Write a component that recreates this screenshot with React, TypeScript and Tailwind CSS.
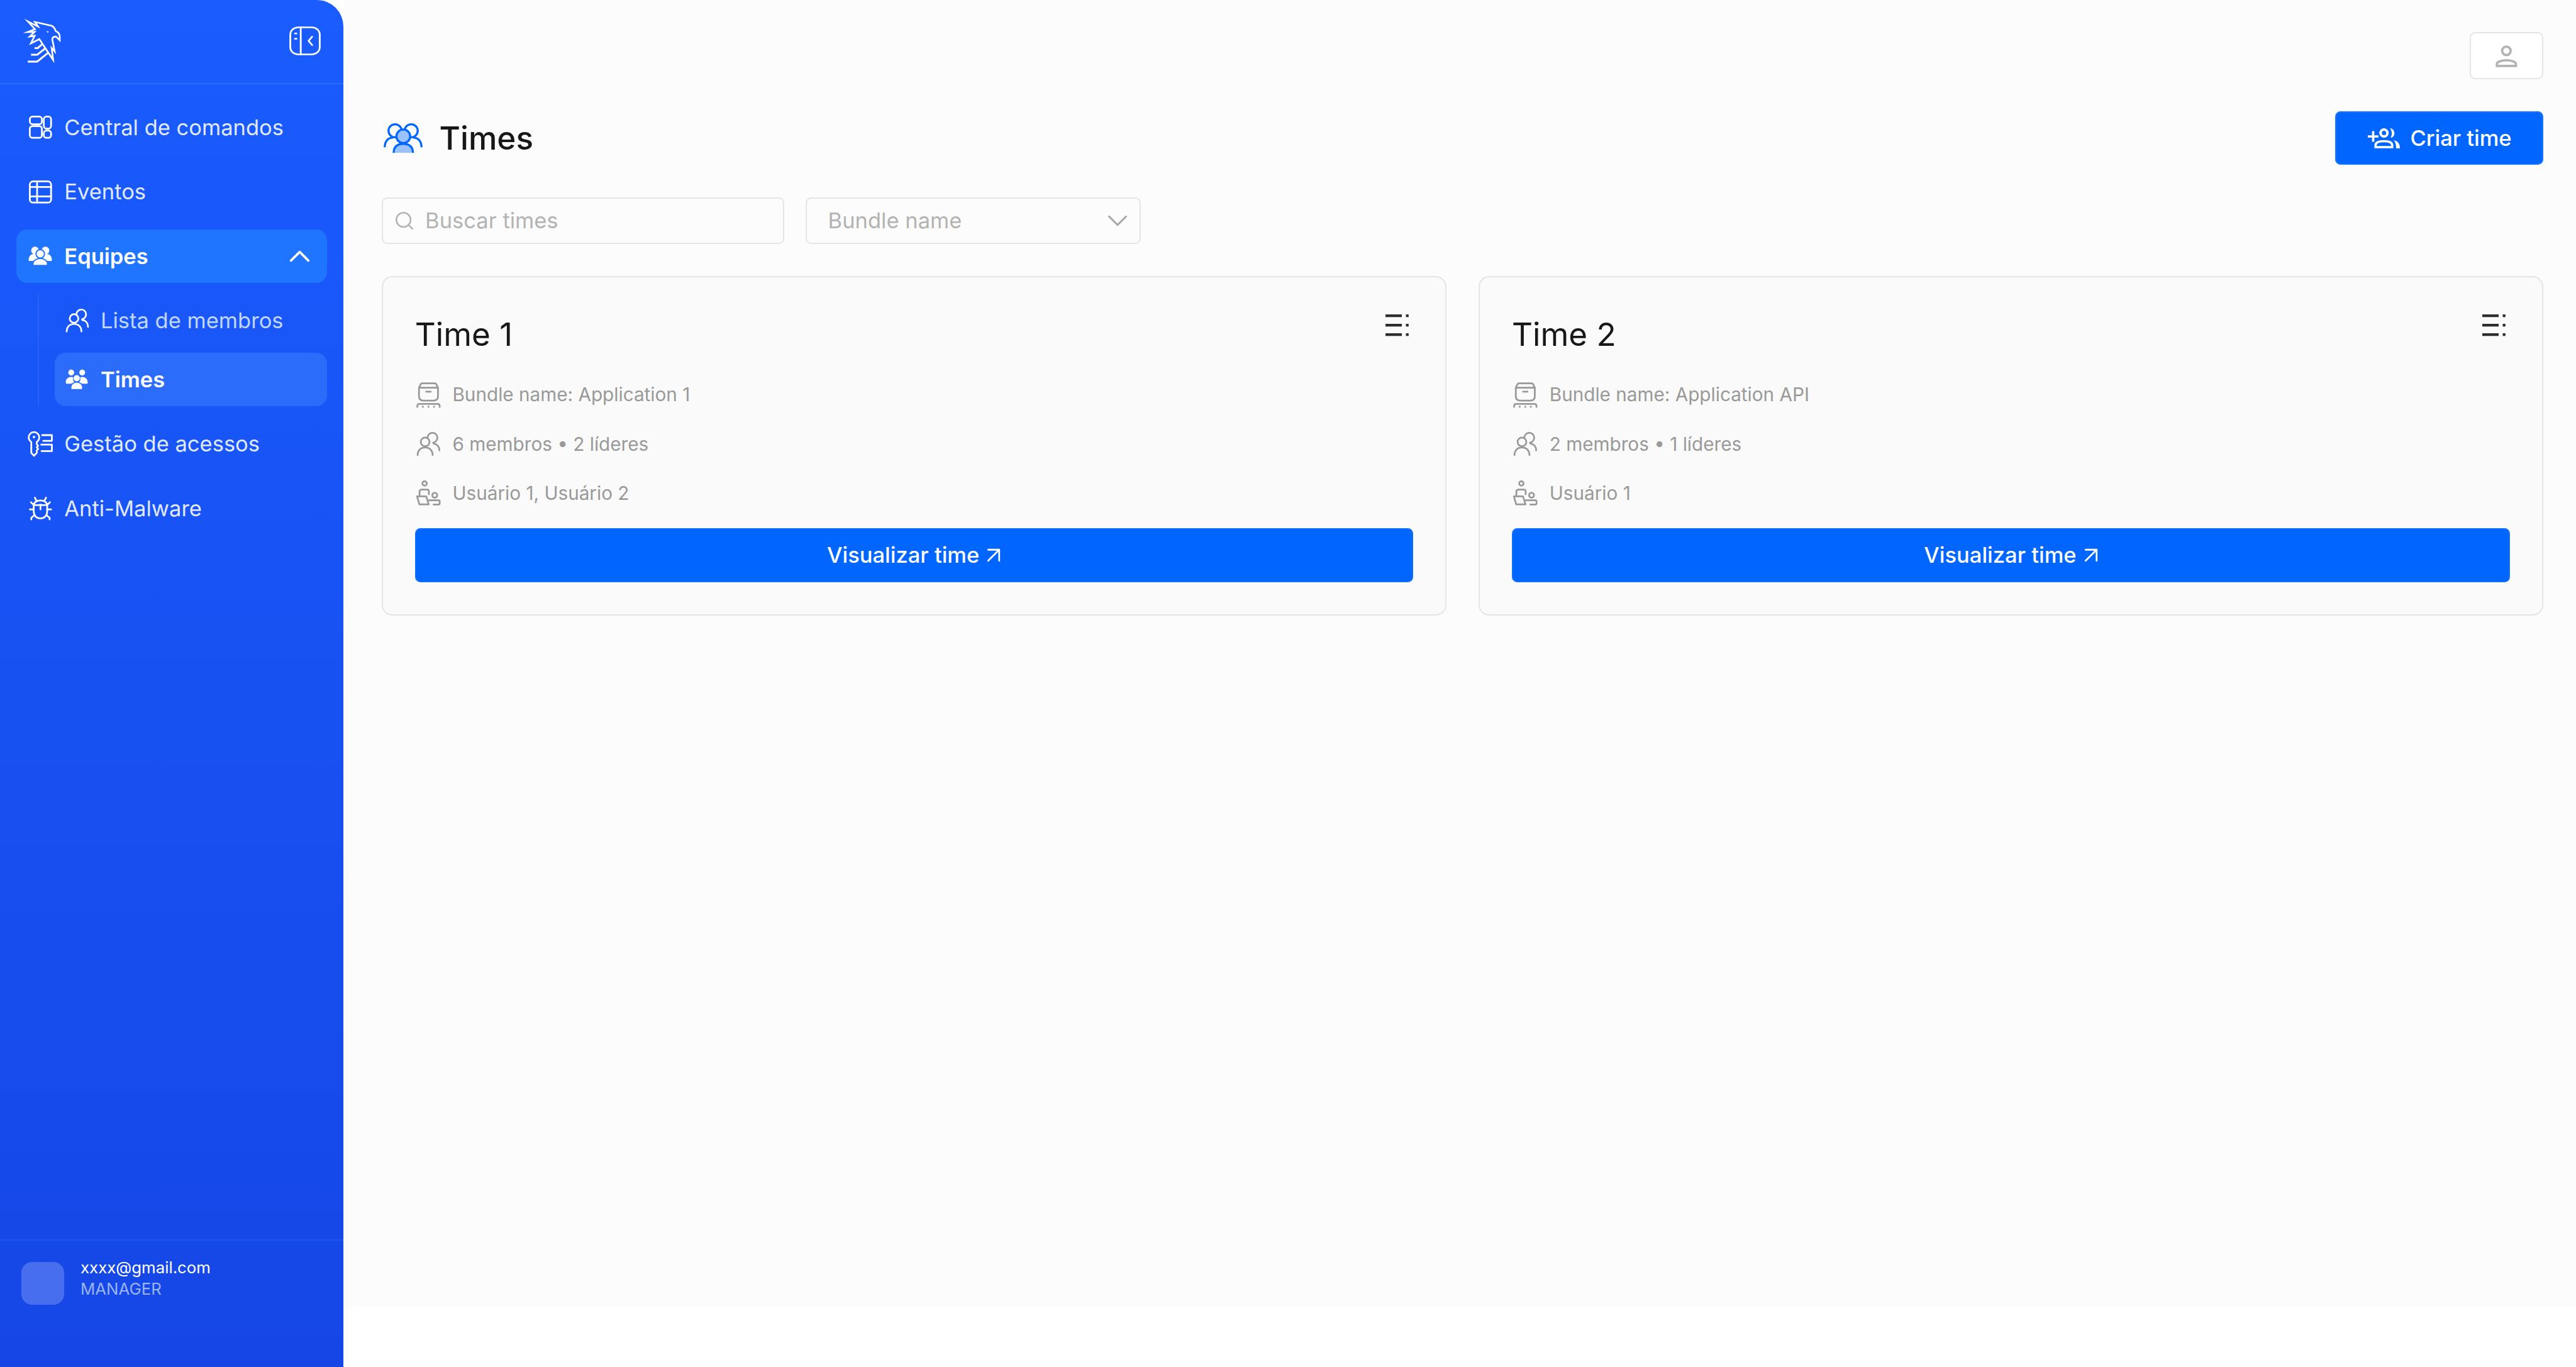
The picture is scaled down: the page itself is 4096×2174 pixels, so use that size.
import { ArrowUpRight, ChevronDown, ChevronUp, Search } from "lucide-react";
import type { ReactNode } from "react";

function Stroke({ children, className }: { children: ReactNode; className?: string }) {
  return (
    <svg viewBox="0 0 24 24" fill="none" stroke="currentColor" strokeWidth="1.55" strokeLinecap="round" strokeLinejoin="round" className={className}>
      {children}
    </svg>
  );
}

function Logo() {
  return (
    <svg viewBox="90 80 350 400" className="h-[71px] w-[62px]" fill="none" stroke="#fff">
      <path
        strokeWidth="15"
        strokeMiterlimit="8"
        d="M195 108 L345 142 Q368 152 382 190 Q410 200 417 232 V272 L385 240 Q352 238 350 262 L372 372 L345 342 L358 448 L234 262 L158 300 L192 232 L148 238 L192 196 L128 198 L195 172 L132 103 L222 148 Z"
      />
      <path strokeWidth="17" d="M192 342H220L256 310M160 402H215L287 345M130 463H215L312 385" />
      <path fill="#fff" stroke="none" d="M297 187L322 197L307 204Z" />
    </svg>
  );
}

function CollapseIcon() {
  return (
    <svg viewBox="1 1 22 22" preserveAspectRatio="none" fill="none" stroke="#fff" strokeWidth="1.25" strokeLinecap="round" strokeLinejoin="round" className="h-[46px] w-[50px]">
      <rect x="1.7" y="1.7" width="20.6" height="20.6" rx="5.5" />
      <path d="M9 1.7V22.3M5 6.4H6M5 10.4H6M17 8.8L14.5 12L17 15.2" />
    </svg>
  );
}

function DashIcon() {
  return (
    <Stroke className="size-[42.67px]">
      <rect x="2.5" y="2.5" width="10.8" height="6.8" rx="2.4" />
      <rect x="2.5" y="11" width="10.8" height="10.5" rx="2.4" />
      <rect x="15" y="2.5" width="6.5" height="10.8" rx="2.4" />
      <rect x="15" y="15" width="6.5" height="6.5" rx="2.4" />
    </Stroke>
  );
}

function TableIcon() {
  return (
    <Stroke className="size-[42.67px]">
      <rect x="2.5" y="2.5" width="19" height="19" rx="3" />
      <path d="M2.5 7.5H21.5M2.5 16H21.5M9 2.5V21.5" />
    </Stroke>
  );
}

function TeamFilledIcon() {
  return (
    <svg viewBox="0 0 24 20" className="h-[32px] w-[40px]" fill="#fff">
      <circle cx="6.8" cy="4.6" r="3.8" />
      <circle cx="17.2" cy="4.6" r="3.8" />
      <path d="M0.5 14C0.5 10 3 8 6 8H18C21 8 23.5 10 23.5 14V15H0.5Z" />
      <circle cx="12" cy="8" r="4.2" stroke="#1f75ff" strokeWidth="1.2" />
      <path d="M4.8 19.5V18C4.8 14.6 8 12.6 12 12.6S19.2 14.6 19.2 18V19.5Z" stroke="#1f75ff" strokeWidth="1.2" />
    </svg>
  );
}

function MembersIcon({ className }: { className?: string }) {
  return (
    <Stroke className={className}>
      <circle cx="9" cy="10" r="3.9" />
      <path d="M2.3 21.8C2.3 17.6 5 15 9 15S15.7 17.6 15.7 21.8" />
      <path d="M11.2 6.7A4.4 4.4 0 1 1 16.3 10.6" />
      <path d="M16.4 11.4C19.6 11.8 21.7 14.2 21.7 17.6" />
    </Stroke>
  );
}

function TimesFilledIcon() {
  return (
    <svg viewBox="0 0 24 22" className="h-[32px] w-[36px]" fill="#fff">
      <circle cx="6" cy="3.8" r="3.2" />
      <circle cx="18" cy="3.8" r="3.2" />
      <circle cx="12" cy="10" r="3.4" />
      <path d="M0 15C0 10.5 2.6 8.6 6 8.6C6.9 8.6 7.6 8.8 8.2 9C7.6 11 8 13 9.3 14.2C7.6 14.8 6.6 15.6 6 16H0.5Z" />
      <path d="M24 15C24 10.5 21.4 8.6 18 8.6C17.1 8.6 16.4 8.8 15.8 9C16.4 11 16 13 14.7 14.2C16.4 14.8 17.4 15.6 18 16H23.5Z" />
      <path d="M6.2 21.8V20C6.2 16.8 8.8 15 12 15S17.8 16.8 17.8 20V21.8Z" />
    </svg>
  );
}

function KeyIcon() {
  return (
    <Stroke className="size-[42.67px]">
      <path d="M1.5 6.5A4.7 4.7 0 0 1 10.9 6.5C10.9 8.5 10 9.8 8.7 10.6V12.6L9.9 14L8.7 15.4L9.9 16.8L8.7 18.2V20.4L6.2 23L3.8 20.4V10.6C2.5 9.8 1.5 8.5 1.5 6.5Z" />
      <path d="M6.2 6.1V6.3" strokeWidth="2" />
      <path d="M13.5 4.5H22.2V9.6H14.5M12.7 13H22.2V18.8H13" />
    </Stroke>
  );
}

function BugIcon() {
  return (
    <Stroke className="size-[42.67px]">
      <path d="M6 9.5C6 6.8 8.5 5 12 5S18 6.8 18 9.5V15C18 18.6 15.4 21 12 21S6 18.6 6 15Z" />
      <path d="M6.4 8.8C8 9.8 9.6 9.2 12 8.8C14.4 9.2 16 9.8 17.6 8.8M12 9V13" />
      <path d="M8.5 5.5L7 2.5M15.5 5.5L17 2.5M6 9L3.5 6.6M18 9L20.5 6.6M6 13H2.5M18 13H21.5M6.8 18L3.8 20.5V22M17.2 18L20.2 20.5V22" />
    </Stroke>
  );
}

function BundleIcon() {
  return (
    <Stroke className="size-[42.67px] shrink-0">
      <path d="M3.5 6L5 2.8Q5.5 2 6.5 2H17.5Q18.5 2 19 2.8L20.5 6V13.5Q20.5 17.5 16.5 17.5H7.5Q3.5 17.5 3.5 13.5ZM3.5 6H20.5M10 9.5H14" />
      <path d="M2 23.2V22.2A1.7 1.7 0 0 1 3.7 20.5H20.3A1.7 1.7 0 0 1 22 22.2V23.2M7 22.8V23.2M12 22.8V23.2M17 22.8V23.2" />
    </Stroke>
  );
}

function LeadersIcon() {
  return (
    <Stroke className="size-[42.67px] shrink-0">
      <circle cx="8.5" cy="3.3" r="2" />
      <path d="M4 13.5V10.6A1.8 1.8 0 0 1 5.8 8.8H11A1.3 1.3 0 0 1 12.3 10.1V13" />
      <path d="M1.8 14.8H10L12.2 22H3.8ZM3.8 22H8" />
      <circle cx="17.6" cy="13.8" r="2.2" />
      <path d="M12.5 18.4H21A1 1 0 0 1 22 19.4V21.4A.7.7 0 0 1 21.3 22.1H16.5" />
    </Stroke>
  );
}

function NavRow({ icon, label, active }: { icon: ReactNode; label: string; active?: boolean }) {
  return (
    <div className={`flex h-[85.33px] items-center gap-[17px] rounded-[17px] px-[17px] ${active ? "bg-[#1f75ff]" : ""}`}>
      <span className="flex size-[42.67px] shrink-0 items-center justify-center text-white">{icon}</span>
      <span className={active ? "font-semibold text-white" : "text-[#e0e9fd]"}>{label}</span>
      {active && <ChevronUp className="ml-auto mr-[-1px] size-[55px] text-white" strokeWidth={1.6} />}
    </div>
  );
}

function Sidebar() {
  return (
    <aside className="flex h-full w-[546px] shrink-0 flex-col rounded-tr-[42px] bg-gradient-to-b from-[#1a5cff] to-[#1646e6] text-[34.5px] leading-[51px]">
      <div className="flex h-[134.4px] shrink-0 items-center justify-between border-b-[2px] border-[#2a6dff] pb-[2px] pl-[37px] pr-[36px]">
        <Logo />
        <CollapseIcon />
      </div>
      <nav className="flex flex-1 flex-col gap-[17px] p-[25.6px]">
        <NavRow icon={<DashIcon />} label="Central de comandos" />
        <NavRow icon={<TableIcon />} label="Eventos" />
        <NavRow icon={<TeamFilledIcon />} label="Equipes" active />
        <div className="ml-[34.4px] flex flex-col gap-[8.5px] border-l-[2px] border-[#2a62f5] pl-[25px]">
          <div className="flex h-[85.33px] items-center gap-[16px] px-[15px] text-[#c1d6fd]">
            <MembersIcon className="size-[42px] shrink-0 text-white" />
            <span>Lista de membros</span>
          </div>
          <div className="flex h-[85.33px] items-center gap-[20px] rounded-[17px] bg-[#2c6cfb] px-[17px]">
            <TimesFilledIcon />
            <span className="font-semibold text-white">Times</span>
          </div>
        </div>
        <NavRow icon={<KeyIcon />} label="Gestão de acessos" />
        <NavRow icon={<BugIcon />} label="Anti-Malware" />
      </nav>
      <div className="flex h-[203px] shrink-0 gap-[26px] border-t-[2px] border-[#1a55f0] pl-[34px] pt-[34px]">
        <div className="size-[68px] rounded-[17px] bg-[#476eee]" />
        <div className="-mt-[8px] text-[25.8px] leading-[34px]">
          <p className="text-white">xxxx@gmail.com</p>
          <p className="text-[#99b4f7]">MANAGER</p>
        </div>
      </div>
    </aside>
  );
}

function TeamCard({ name, bundle, counts, users }: { name: string; bundle: string; counts: string; users: string }) {
  return (
    <div className="relative flex h-[539.5px] flex-col rounded-[17px] border-[2.13px] border-[#e5e5e5] bg-[#fafafa] p-[51.2px]">
      <svg viewBox="0 0 37 35" className="absolute right-[58px] top-[59px] h-[35px] w-[37px]" fill="#2e2e2e">
        <rect y="0" width="26" height="4.3" />
        <rect x="32.5" y="0" width="4.3" height="4.3" />
        <rect y="15" width="26" height="4.3" />
        <rect x="32.5" y="15" width="4.3" height="4.3" />
        <rect y="30" width="26" height="4.3" />
        <rect x="32.5" y="30" width="4.3" height="4.3" />
      </svg>
      <h2 className="h-[68px] text-[51.2px] leading-[76px] text-[#171717]">{name}</h2>
      <div className="mt-[45.5px] flex flex-col gap-[35.8px] text-[29.7px] leading-[42.67px] text-[#999999]">
        <div className="flex items-center gap-[17px]">
          <BundleIcon />
          <span>{bundle}</span>
        </div>
        <div className="flex items-center gap-[17px]">
          <MembersIcon className="size-[42.67px] shrink-0" />
          <span>{counts}</span>
        </div>
        <div className="flex items-center gap-[17px]">
          <LeadersIcon />
          <span>{users}</span>
        </div>
      </div>
      <button className="mt-auto flex h-[85.33px] w-full items-center justify-center gap-[2px] rounded-[8.5px] border-[2.13px] border-[#0f6fff] bg-[#0066ff] pl-[10px] text-[34.5px] font-medium text-white">
        Visualizar time
        <ArrowUpRight className="size-[42px]" strokeWidth={1.6} />
      </button>
    </div>
  );
}

export default function App() {
  return (
    <div className="flex h-[2174px] w-[4096px] overflow-hidden bg-white font-[family-name:Inter,sans-serif]">
      <Sidebar />
      <div className="flex h-[2078px] flex-1 flex-col bg-[#fcfcfc] pl-[60.6px] pr-[52px] pt-[51.2px]">
        <div className="flex justify-end">
          <button className="flex h-[74.67px] w-[117px] items-center justify-center rounded-[8.5px] border-[2.13px] border-[#e5e5e5] bg-white text-[#b3b3b3]">
            <svg viewBox="0 0 24 24" fill="none" stroke="currentColor" strokeWidth="2.1" className="size-[42.67px]">
              <circle cx="12" cy="7.8" r="3.8" />
              <path d="M3.5 21.3V19.5C3.5 17.5 7.5 16.3 12 16.3S20.5 17.5 20.5 19.5V21.3Z" />
            </svg>
          </button>
        </div>
        <div className="mt-[51.2px] flex h-[85.33px] items-center justify-between">
          <div className="ml-[3px] flex items-center gap-[27px]">
            <svg viewBox="0 0 113 86" className="h-[47px] w-[62px]" fill="none" stroke="#0066ff" strokeWidth="6">
              <circle cx="33" cy="22" r="19" />
              <circle cx="80" cy="22" r="19" />
              <path d="M3 70C3 52 13 42 27 42M110 70C110 52 100 42 86 42" />
              <circle cx="57" cy="38" r="20" fill="#99c2ff" />
              <path d="M29 86C29 68 40 60 57 60S85 68 85 86" fill="#99c2ff" />
            </svg>
            <h1 className="text-[51.2px] font-medium text-[#171717]">Times</h1>
          </div>
          <button className="flex h-[85.33px] w-[331px] items-center justify-center gap-[16px] rounded-[8.5px] border-[2.13px] border-[#1a75ff] bg-[#0066ff] pl-[2px] text-[34.5px] font-medium text-white">
            <svg viewBox="0 0 51 32" className="h-[32px] w-[51px]" fill="none" stroke="#fff">
              <path strokeWidth="3.6" d="M0 13H17M8.5 4.5V21.5" />
              <circle cx="25.7" cy="7.5" r="5.5" strokeWidth="4" />
              <path strokeWidth="3.6" d="M12.3 30V27C12.3 22.5 18 20.5 25.7 20.5S38.7 22.5 38.7 27V30Z" />
              <path fill="#fff" stroke="none" d="M35 0C44 0 45 15 36 15C39 11 39 4 35 0ZM41 19C47 20 51 24 51 32H45C45 26 44 22 41 19Z" />
            </svg>
            Criar time
          </button>
        </div>
        <div className="mt-[51.2px] flex gap-[34px] text-[34.5px] text-[#b3b3b3]">
          <div className="flex h-[74.67px] w-[640px] items-center gap-[16.5px] rounded-[8.5px] border-[2.13px] border-[#e5e5e5] bg-[#fcfcfc] pl-[17px]">
            <Search className="size-[34px]" strokeWidth={1.8} />
            <span>Buscar times</span>
          </div>
          <div className="flex h-[74.67px] w-[533px] items-center justify-between rounded-[8.5px] border-[2.13px] border-[#e5e5e5] bg-[#fcfcfc] pl-[34px] pr-[8px]">
            <span>Bundle name</span>
            <ChevronDown className="size-[54px] text-[#a6a6a6]" strokeWidth={1.3} />
          </div>
        </div>
        <div className="mt-[51.2px] grid grid-cols-2 gap-[51.2px]">
          <TeamCard name="Time 1" bundle="Bundle name: Application 1" counts="6 membros • 2 líderes" users="Usuário 1, Usuário 2" />
          <TeamCard name="Time 2" bundle="Bundle name: Application API" counts="2 membros • 1 líderes" users="Usuário 1" />
        </div>
      </div>
    </div>
  );
}
